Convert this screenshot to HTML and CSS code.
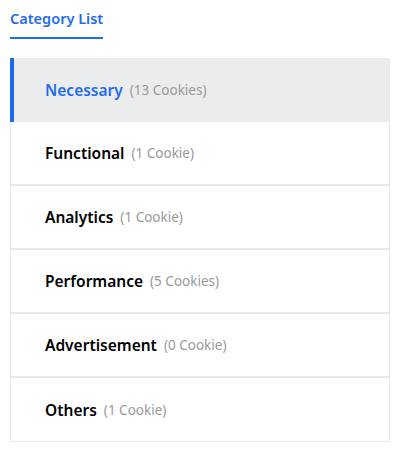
FILE: index.html
```html
<!DOCTYPE html>
<html>
<head>
<meta charset="utf-8">
<link rel="stylesheet" href="styles.css">
</head>
<body>
<div class="page">
  <div class="tabs"><span class="tab active">Category List</span></div>
  <ul class="cat-list">
    <li class="cat active"><span class="name">Necessary</span><span class="count">(13 Cookies)</span></li>
    <li class="cat"><span class="name">Functional</span><span class="count">(1 Cookie)</span></li>
    <li class="cat"><span class="name">Analytics</span><span class="count">(1 Cookie)</span></li>
    <li class="cat"><span class="name">Performance</span><span class="count">(5 Cookies)</span></li>
    <li class="cat"><span class="name">Advertisement</span><span class="count">(0 Cookie)</span></li>
    <li class="cat"><span class="name">Others</span><span class="count">(1 Cookie)</span></li>
  </ul>
</div>
</body>
</html>
```
FILE: styles.css
```css
html, body { margin: 0; padding: 0; background: #fff; }
body { font-family: "Noto Sans", "Open Sans", sans-serif; }
.page { padding: 8px 13px 0 10px; }
.tabs { display: flex; margin-bottom: 19px; }
.tab {
  font-size: 14.5px;
  font-weight: 600;
  line-height: 20px;
  color: #1f6bf0;
  padding-bottom: 9px;
  border-bottom: 2px solid #1f6bf0;
}
.cat-list {
  list-style: none;
  margin: 0;
  padding: 0;
  border: 1px solid #e8e8e8;
  border-top: none;
}
.cat {
  display: flex;
  align-items: center;
  gap: 7px;
  height: 62px;
  padding-left: 34px;
  border-bottom: 2px solid #ebebeb;
}
.cat:last-child { border-bottom: none; height: 63px; }
.cat.active {
  background: #ebecee;
  border-left: 4px solid #1f6bf0;
  padding-left: 31px;
  margin-left: -1px;
  margin-right: -1px;
  height: 64px;
  border-bottom: none;
}
.name { font-size: 15.5px; font-weight: 600; color: #000; }
.cat.active .name { color: #1f6bf0; }
.count { font-size: 13.5px; color: #999; }
```
